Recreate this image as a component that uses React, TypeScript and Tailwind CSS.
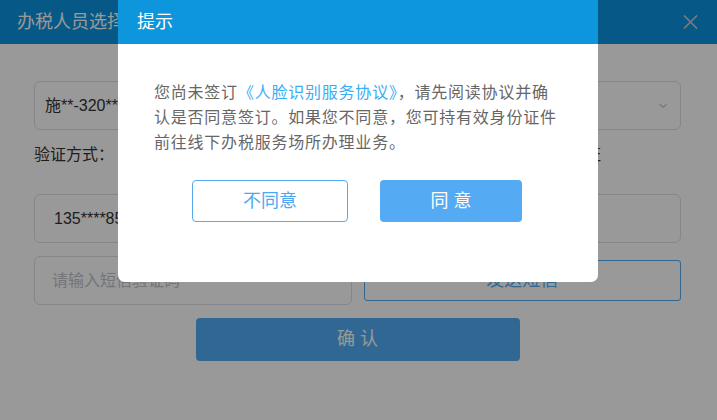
import { ChevronDown } from "lucide-react";

const cjk = { fontFamily: '"Liberation Sans", "Noto Sans CJK SC", sans-serif' };

function PageBehind() {
  return (
    <div className="flex flex-col w-full h-full bg-white">
      <div className="h-[44px] bg-[#0b94df] flex items-center justify-between pl-[17px] pr-[19px]">
        <span className="text-[18px] text-white">办税人员选择</span>
        <svg width="15" height="14" viewBox="0 0 15 14">
          <path d="M1 0.5 L14 13.5 M14 0.5 L1 13.5" stroke="#cfcfcf" strokeWidth="1.6" />
        </svg>
      </div>

      <div className="flex flex-col pl-[34px] pr-[36px]">
        <div className="mt-[37px] h-[49px] border border-[#dcdfe6] rounded-[6px] flex items-center justify-between pl-[10px] pr-[11px]">
          <span className="text-[16px] text-[#333]">施**-320**********12</span>
          <ChevronDown size={12} strokeWidth={1.5} color="#777" />
        </div>

        <div className="h-[50px] flex items-center text-[16px] text-[#333] pr-[80px]">
          <span>验证方式：</span>
          <div className="flex-1 flex justify-between pl-[30px]">
            <span>○ 短信验证</span>
            <span>○ 人脸识别认证</span>
          </div>
        </div>

        <div className="mt-[14px] h-[49px] border border-[#dcdfe6] rounded-[6px] flex items-center pl-[19px] text-[16px] text-[#333]">
          135****8512
        </div>

        <div className="mt-[13px] h-[49px] grid grid-cols-2 gap-[12px] items-center">
          <div className="h-full border border-[#dcdfe6] rounded-[6px] flex items-center pl-[17px] text-[16px] text-[#c0c4cc]">
            请输入短信验证码
          </div>
          <div className="h-[41px] border border-[#52adf5] rounded-[3px] flex items-center justify-center text-[18px] text-[#52adf5]">
            发送短信
          </div>
        </div>

        <div className="mt-[13px] mx-auto w-[324px] h-[43px] rounded-[4px] bg-[#52adf5] flex items-center justify-center text-[18px] text-white">
          确 认
        </div>
      </div>
    </div>
  );
}

export default function App() {
  return (
    <div className="relative w-[717px] h-[420px] overflow-hidden" style={cjk}>
      <PageBehind />
      <div className="absolute inset-0 bg-black/40" />

      <div className="absolute left-[118px] top-0 w-[480px] bg-white rounded-b-[7px] overflow-hidden">
        <div className="h-[44px] bg-[#0e96dc] flex items-center pl-[19px]">
          <span className="text-[18px] text-white">提示</span>
        </div>
        <div className="pt-[36px] pl-[36px] pr-[38px] pb-[60px]">
          <p className="text-[16px] leading-[25px] tracking-[0.78px] text-[#666]">
            您尚未签订<span className="text-[#3aadf5]">《人脸识别服务协议》</span>，请先阅读协议并确认是否同意签订。如果您不同意，您可持有效身份证件前往线下办税服务场所办理业务。
          </p>
          <div className="mt-[25px] flex justify-center gap-[32px]">
            <button className="w-[156px] h-[42px] border border-[#55aaf0] rounded-[4px] text-[18px] text-[#4ea8ef] bg-white">
              不同意
            </button>
            <button className="w-[142px] h-[42px] rounded-[4px] bg-[#55abf3] text-[18px] text-white">
              同 意
            </button>
          </div>
        </div>
      </div>
    </div>
  );
}
